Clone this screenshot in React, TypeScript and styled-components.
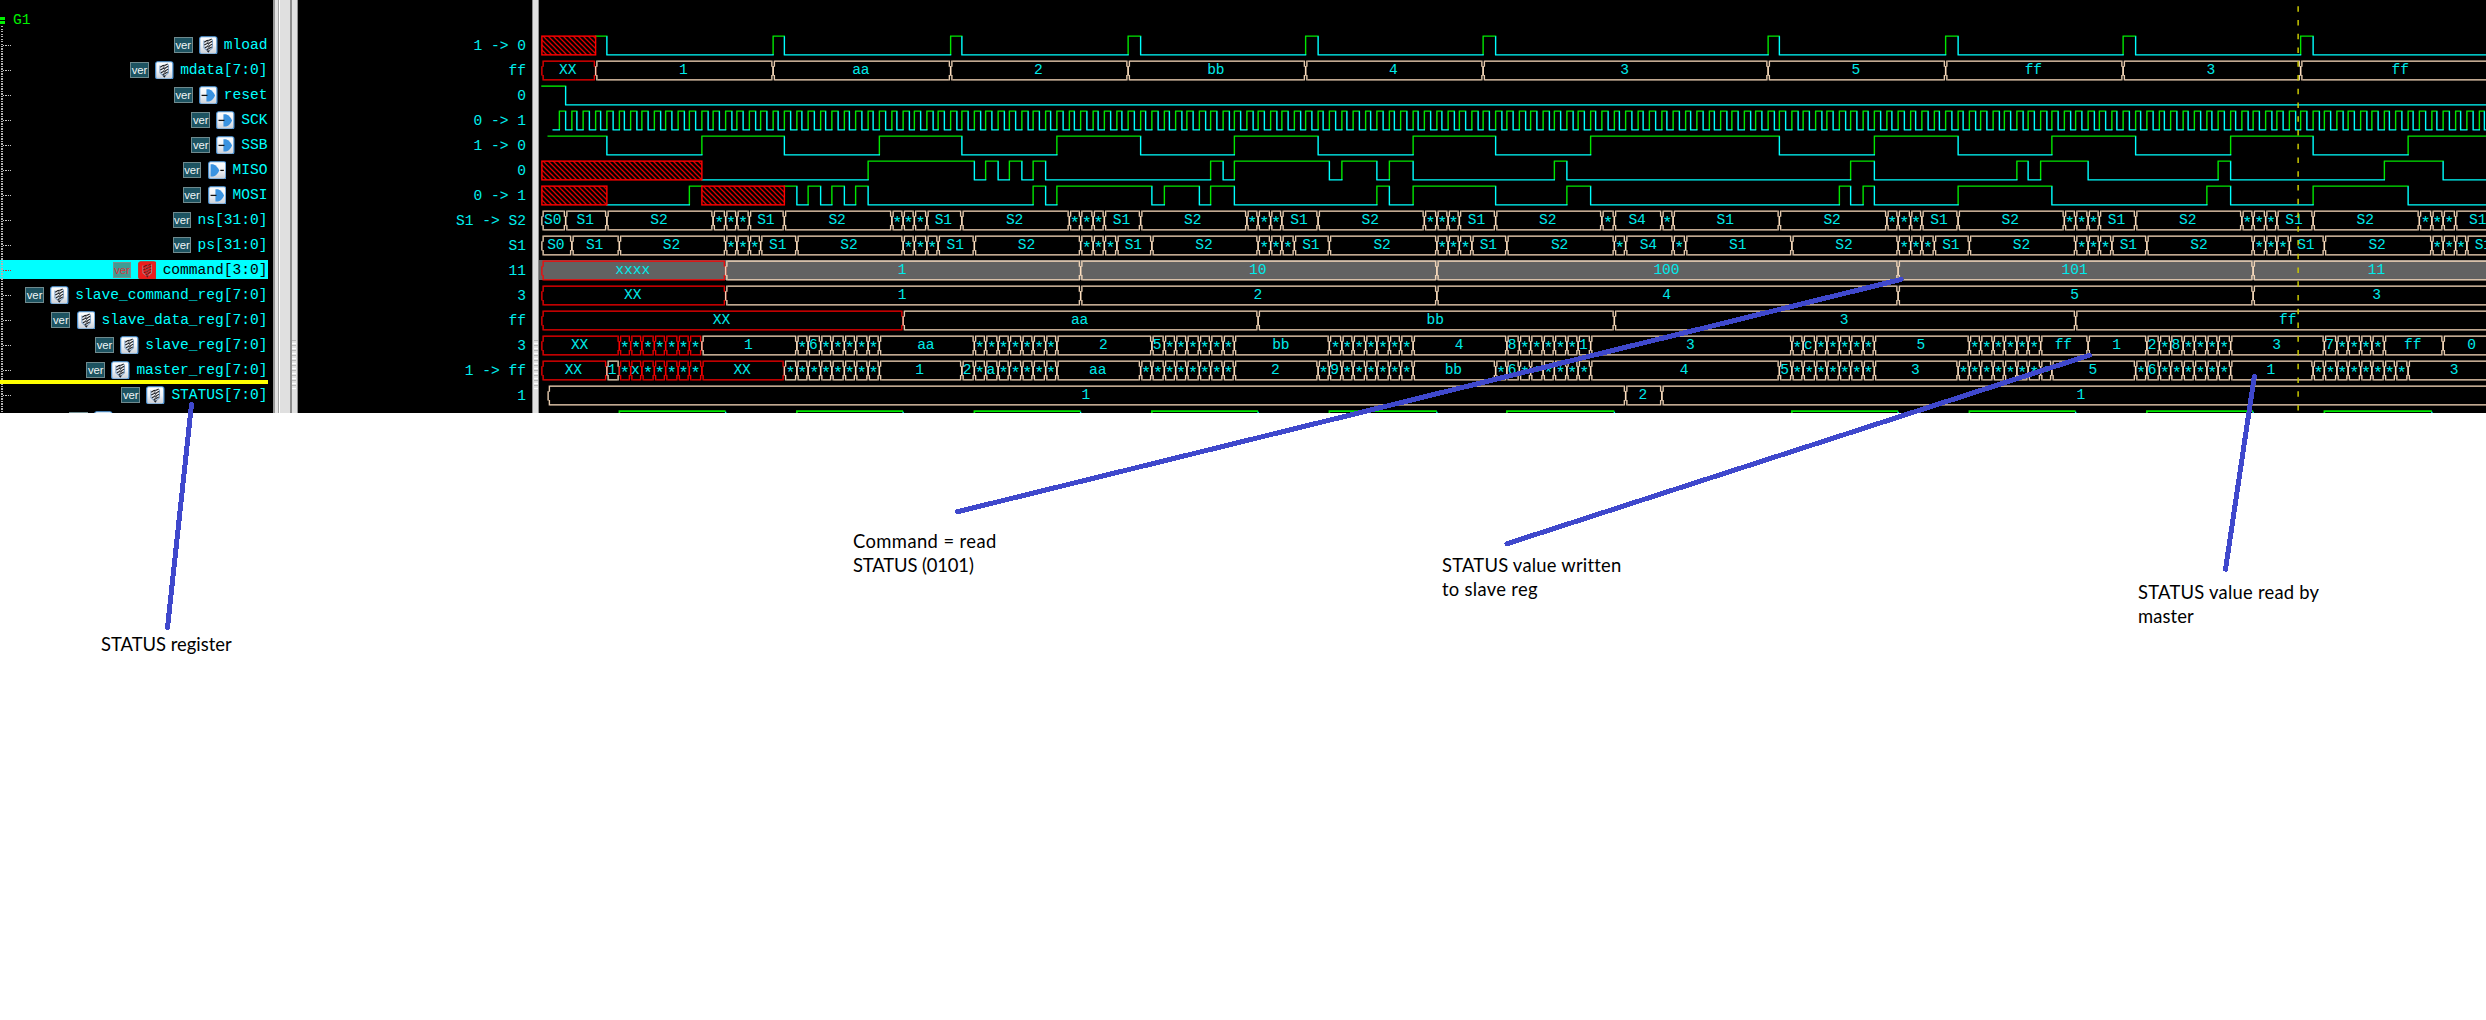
import React from "react";
import styled, { createGlobalStyle } from "styled-components";

const GlobalStyle = createGlobalStyle`
  html, body { margin: 0; padding: 0; background: #ffffff; }
  * { box-sizing: border-box; }
`;

const MONO = `"Liberation Mono", "Courier New", monospace`;
const CYAN = "#00ffff";
const GREEN = "#00e600";
const RED = "#ff0000";
const TAN = "#ffe0c0";

/* ---------- layout ---------- */

const Page = styled.main`
  position: relative;
  width: 2486px;
  height: 1020px;
  overflow: hidden;
  background: #ffffff;
`;

const Viewer = styled.section`
  display: grid;
  grid-template-columns: 273px 25px 234px 7px 1fr;
  height: 413px;
  overflow: hidden;
  background: #000000;
  font: 14.583px/25px ${MONO};
`;

const Pane = styled.div`
  position: relative;
  display: flex;
  flex-direction: column;
  min-width: 0;
  overflow: hidden;
`;

const NamePane = styled(Pane)`
  padding-right: 5.4px;
`;

const Header = styled.div`
  display: flex;
  align-items: center;
  flex: none;
  height: 32.5px;
  padding-top: 9px;
  color: #00f000;
`;

const GroupMark = styled.span`
  width: 5px;
  height: 7px;
  margin-right: 8px;
  border: solid #00f000;
  border-width: 3px 0;
`;

const Row = styled.div`
  flex: none;
  height: 25px;
`;

const NameRow = styled(Row)<{ $selected?: boolean }>`
  display: flex;
  align-items: center;
  justify-content: flex-end;
  gap: 6.3px;
  color: ${(p) => (p.$selected ? "#000" : CYAN)};
  background: ${(p) =>
    p.$selected ? `linear-gradient(${CYAN}, ${CYAN}) 0 2.5px / 100% 19px no-repeat` : "none"};
`;

const Stub = styled.span<{ $selected?: boolean }>`
  width: 8px;
  height: 1px;
  margin: 0 auto 0 3px;
  background: repeating-linear-gradient(
    90deg,
    ${(p) => (p.$selected ? "#c03030" : "#c8c8c8")} 0 1.4px,
    transparent 1.4px 2.5px
  );
`;

const TreeLine = styled.div`
  position: absolute;
  left: 1px;
  top: 26px;
  bottom: 0;
  width: 1.6px;
  background: repeating-linear-gradient(#b4b4b4 0 1.3px, transparent 1.3px 2.5px);
`;

const InsertMark = styled.div`
  position: absolute;
  left: 0;
  top: 380px;
  width: 267.7px;
  height: 3.75px;
  background: #ffff00;
`;

const Badge = styled.span<{ $selected?: boolean }>`
  width: 18.8px;
  height: 16.6px;
  border: 1px solid ${(p) => (p.$selected ? "#7b8f8c" : "#6f8a8e")};
  background: ${(p) => (p.$selected ? "#3f9c94" : "#1d5361")};
  color: ${(p) => (p.$selected ? "#d8343c" : "#f2f6f6")};
  font: 11.3px/15px "Liberation Sans", Arial, sans-serif;
  text-align: center;
`;

const NameText = styled.span<{ $chars?: number }>`
  white-space: pre;
  width: ${(p) => (p.$chars ? `${p.$chars * 8.75}px` : "auto")};
`;

const ValueRow = styled(Row)`
  display: flex;
  justify-content: flex-end;
  padding: 1.4px 6px 0 0;
  color: #00eeee;
  white-space: pre;
`;

const Splitter = styled.div`
  display: flex;
  background: #e0e0e0;
`;

const Strip = styled.span<{ $w: number; $c: string }>`
  flex: none;
  width: ${(p) => p.$w}px;
  background: ${(p) => p.$c};
`;

const GripTrack = styled.span`
  flex: 1;
  padding: 340px 0.5px 0;
  background: #e0e0e0;
`;

const Grip = styled.span`
  display: block;
  height: 50px;
  background: repeating-linear-gradient(#bcbcbc 0 1px, #e4e4e4 1px 3px, #ffffff 3px 4.4px, #e4e4e4 4.4px 5px);
`;

const WaveRow = styled(Row)<{ $selected?: boolean }>`
  background: ${(p) =>
    p.$selected ? "linear-gradient(#626262, #626262) 0 2.5px / 100% 20px no-repeat" : "none"};
`;

const WaveSvg = styled.svg`
  display: block;
  width: 1947px;
  height: 25px;
  overflow: visible;
  fill: none;
  stroke-width: 1.12;
  font: 11.667px ${MONO};
`;

const BusText = styled.text<{ $star?: boolean }>`
  fill: #00eaea;
  stroke: none;
  white-space: pre;
  font-size: ${(p) => (p.$star ? 13.4 : 11.667)}px;
`;

const CursorSvg = styled.svg`
  position: absolute;
  left: 0;
  top: 0;
  width: 1947px;
  height: 413px;
`;

const Marker = styled.svg`
  position: absolute;
  left: 0;
  top: 0;
  width: 2486px;
  height: 1020px;
`;

const Note = styled.p<{ $x: number; $y: number }>`
  position: absolute;
  left: ${(p) => p.$x}px;
  top: ${(p) => p.$y}px;
  margin: 0;
  color: #000000;
  font: 18.4px/24.2px Lato, "Noto Sans", sans-serif;
  white-space: pre;
`;

const NoteLine = styled.span<{ $spacing?: number }>`
  display: block;
  letter-spacing: ${(p) => p.$spacing ?? 0}px;
`;

/* ---------- time axis ---------- */

const ORIGIN = 431.2;
const START = -99;
const END = 999;

/** Position of a clock tick on the wave pane grid. */
const px = (k: number) =>
  k === START ? 433 : k === END ? 2001 : Math.floor(485.55 + 9.478 * k);

const HIGH = 2.5;
const LOW = 17.5;

/* ---------- bit traces ---------- */

type Level = "0" | "1" | "x";
type Step = [number, Level];

function levels(first: Step, edges: number[]): Step[] {
  const out: Step[] = [first];
  let level = first[1];
  edges.forEach((k) => {
    level = level === "1" ? "0" : "1";
    out.push([k, level]);
  });
  return out;
}

function Bit({ steps }: { steps: Step[] }) {
  let green = "";
  let cyan = "";
  const blocks: [number, number][] = [];
  steps.forEach(([k, level], i) => {
    const a = px(k) + 0.5;
    const b = px(i + 1 < steps.length ? steps[i + 1][0] : END) + 0.5;
    const prev = i > 0 ? steps[i - 1][1] : level;
    if (level === "x") {
      blocks.push([a, b]);
      return;
    }
    if (level === "1") {
      if (prev === "0") green += `M${a} ${LOW}V${HIGH}`;
      green += `M${a - 0.5} ${HIGH}H${b + 0.5}`;
    } else {
      if (prev === "1") cyan += `M${a} ${HIGH}V${LOW}`;
      cyan += `M${a - 0.5} ${LOW}H${b + 0.5}`;
    }
  });
  return (
    <>
      <path d={green} stroke={GREEN} />
      <path d={cyan} stroke={CYAN} />
      {blocks.map(([a, b]) => (
        <rect key={a} x={a} y={HIGH} width={b - a} height={LOW - HIGH} fill="url(#unknown)" stroke={RED} />
      ))}
    </>
  );
}

/* ---------- bus traces ---------- */

type Seg = [number, string, boolean?];

/** One character per clock tick, starting at tick k. */
const cells = (k: number, chars: string, red = false): Seg[] =>
  chars.split("").map((c, i) => [k + i, c, red] as Seg);

function Bus({ segs }: { segs: Seg[] }) {
  return (
    <>
      {segs.map(([k, label, red], i) => {
        const a = px(k) + 0.5;
        const b = px(i + 1 < segs.length ? segs[i + 1][0] : END) + 0.5;
        const star = label === "*";
        const left = (a + b) / 2 - label.length * 3.5 - (star ? 0.7 : 0.8);
        return (
          <g key={k}>
            <path
              stroke={red ? RED : TAN}
              d={`M${a + 1.5} ${HIGH}H${b - 1.5}M${a + 1.5} ${LOW}H${b - 1.5}`}
            />
            <path
              stroke={red ? RED : TAN}
              strokeOpacity={0.9}
              d={`M${a + 1} 2V7M${a} 6.5V14M${a + 1} 13.5V18M${b - 1} 2V7M${b} 6.5V14M${b - 1} 13.5V18`}
            />
            <BusText $star={star} x={left} y={star ? 15.6 : 13}>
              {label}
            </BusText>
          </g>
        );
      })}
    </>
  );
}

/* ---------- signal data ---------- */

const loads = [0, 14, 15, 29, 30, 44, 45, 59, 60, 74, 75, 98, 99, 113, 114, 128, 129, 143, 144];

const clockEdges: number[] = [];
for (let k = -4; k < 160; k += 0.5) clockEdges.push(k);

function states(shift: number): Seg[] {
  const out: Seg[] = [
    [START, "S0"],
    [shift ? -3 : -3.5, "S1"],
  ];
  [0, 15, 30, 45, 60, 75, 99, 114, 129, 144].forEach((b) => {
    const k = b + shift;
    out.push([k, "S2"]);
    if (b === 75) {
      out.push([k + 9, "*"], [k + 10, "S4"], [k + 14, "*"], [k + 15, "S1"]);
    } else {
      out.push([k + 9, "*"], [k + 10, "*"], [k + 11, "*"], [k + 12, "S1"]);
    }
  });
  return out;
}

type IconKind = "reg" | "in" | "out" | null;
interface Signal {
  name: string;
  icon: IconKind;
  value: string;
  selected?: boolean;
  bits?: Step[];
  bus?: Seg[];
}

const signals: Signal[] = [
  {
    name: "mload",
    icon: "reg",
    value: "1 -> 0",
    bits: [[START, "x"], ...levels([-1, "1"], loads)],
  },
  {
    name: "mdata[7:0]",
    icon: "reg",
    value: "ff",
    bus: [
      [START, "XX", true], [-1, "1"], [14, "aa"], [29, "2"], [44, "bb"], [59, "4"],
      [74, "3"], [98, "5"], [113, "ff"], [128, "3"], [143, "ff"],
    ],
  },
  { name: "reset", icon: "in", value: "0", bits: [[START, "1"], [-3.5, "0"]] },
  { name: "SCK", icon: "in", value: "0 -> 1", bits: levels([-4.5, "0"], clockEdges) },
  {
    name: "SSB",
    icon: "in",
    value: "1 -> 0",
    bits: levels(
      [-5, "1"],
      [0, 8, 15, 23, 30, 38, 45, 53, 60, 68, 75, 83, 99, 107, 114, 122, 129, 137, 144, 152]
    ),
  },
  {
    name: "MISO",
    icon: "out",
    value: "0",
    bits: [
      [START, "x"],
      ...levels(
        [8, "0"],
        [22, 31, 32, 33, 34, 35, 36, 37, 51, 52, 53, 61, 62, 65, 66, 68, 80, 81, 105, 107, 119, 120, 121, 125, 136, 137, 150, 155]
      ),
    ],
  },
  {
    name: "MOSI",
    icon: "in",
    value: "0 -> 1",
    bits: [
      [START, "x"],
      ...levels([0, "0"], [7]),
      [8, "x"],
      ...levels(
        [15, "1"],
        [16, 17, 18, 19, 20, 21, 22, 36, 37, 38, 46, 47, 50, 51, 53, 65, 66, 68, 75, 81, 83, 104, 105, 106, 107, 114, 122, 135, 137, 144, 152]
      ),
    ],
  },
  { name: "ns[31:0]", icon: null, value: "S1 -> S2", bus: states(0) },
  { name: "ps[31:0]", icon: null, value: "S1", bus: states(1) },
  {
    name: "command[3:0]",
    icon: "reg",
    value: "11",
    selected: true,
    bus: [[START, "xxxx", true], [10, "1"], [40, "10"], [70, "100"], [109, "101"], [139, "11"]],
  },
  {
    name: "slave_command_reg[7:0]",
    icon: "reg",
    value: "3",
    bus: [[START, "XX", true], [10, "1"], [40, "2"], [70, "4"], [109, "5"], [139, "3"]],
  },
  {
    name: "slave_data_reg[7:0]",
    icon: "reg",
    value: "ff",
    bus: [[START, "XX", true], [25, "aa"], [55, "bb"], [85, "3"], [124, "ff"]],
  },
  {
    name: "slave_reg[7:0]",
    icon: "reg",
    value: "3",
    bus: [
      [START, "XX", true], ...cells(1, "*******", true), [8, "1"], ...cells(16, "*6*****"),
      [23, "aa"], ...cells(31, "*******"), [38, "2"], ...cells(46, "5******"), [53, "bb"],
      ...cells(61, "*******"), [68, "4"], ...cells(76, "8*****1"), [83, "3"],
      ...cells(100, "*c*****"), [107, "5"], ...cells(115, "******"), [121, "ff"], [125, "1"],
      ...cells(130, "2*8****"), [137, "3"], ...cells(145, "7****"), [150, "ff"], [155, "0"],
    ],
  },
  {
    name: "master_reg[7:0]",
    icon: "reg",
    value: "1 -> ff",
    bus: [
      [START, "XX", true], [0, "1"], ...cells(1, "*x*****", true), [8, "XX", true],
      ...cells(15, "********"), [23, "1"], ...cells(30, "2*a*****"), [38, "aa"],
      ...cells(45, "********"), [53, "2"], ...cells(60, "*9******"), [68, "bb"],
      ...cells(75, "*6******"), [83, "4"], ...cells(99, "5*******"), [107, "3"],
      ...cells(114, "********"), [122, "5"], ...cells(129, "*6******"), [137, "1"],
      ...cells(144, "********"), [152, "3"],
    ],
  },
  {
    name: "STATUS[7:0]",
    icon: "reg",
    value: "1",
    bus: [[-5, "1"], [86, "2"], [89, "1"]],
  },
];

const tailPulses = [1, 16, 31, 46, 61, 76, 100, 115, 130, 145];

/* ---------- icons ---------- */

function SignalIcon({ kind, selected }: { kind: IconKind; selected?: boolean }) {
  const line = selected ? "#6a1818" : "#1c1e22";
  return (
    <svg width="18.6" height="18.8" viewBox="0 0 19 19">
      <rect
        x="0.7"
        y="0.7"
        width="17.6"
        height="17.6"
        rx="2"
        fill={selected ? "#ee1c1c" : "url(#tile)"}
        stroke={selected ? "#d02a20" : "#4d96d8"}
        strokeWidth="1.2"
      />
      {kind === "reg" && (
        <g fill="none">
          <path
            d="M5 4.6v7.2l4.5 4 4.3-4V3.4"
            stroke={selected ? "#b08080" : "#86a8cc"}
            strokeWidth="1.1"
          />
          <path
            d="M5.4 6.2L8 4.6l2-.2L13 3M5.4 9.2l2.8-1.6 2-.4 3.2-2M6 12l2.6-1.4 1.8-.4 3-2M7.8 14l2-1 3.4-2"
            stroke={line}
            strokeWidth="1.15"
          />
          <path
            d="M10.6 3.6L7.4 8M11.4 6.4l-3.6 4.8M11.6 9.2L9 13.2"
            stroke={selected ? "#9a5050" : "#5a5e66"}
            strokeWidth="1"
          />
          <path d="M7.8 14.6h3.4l-1.7 2.4z" fill={line} />
        </g>
      )}
      {kind === "in" && (
        <>
          <path d="M7.6 3.2h2.6c3.2 1 5 3.4 6.2 6.3-1.2 2.9-3 5.3-6.2 6.3H7.6z" fill="#3a93e0" />
          <path d="M2.6 9.5h6" stroke="#101010" strokeWidth="1.3" />
        </>
      )}
      {kind === "out" && (
        <>
          <path d="M2.6 3.2h2.6c3.2 1 5 3.4 6.4 6.3-1.4 2.9-3.2 5.3-6.4 6.3H2.6z" fill="#3a93e0" />
          <path d="M12.6 9.5h3.6" stroke="#101010" strokeWidth="1.3" />
        </>
      )}
    </svg>
  );
}

function SharedDefs() {
  return (
    <defs>
      <linearGradient id="tile" x1="0" y1="0" x2="0" y2="1">
        <stop offset="0" stopColor="#ffffff" />
        <stop offset="0.5" stopColor="#f1f3f6" />
        <stop offset="1" stopColor="#c9ced6" />
      </linearGradient>
      <pattern id="unknown" width="4" height="4" patternUnits="userSpaceOnUse">
        <path d="M0 0L4 4M-1 3L1 5M3 -1L5 1" stroke="#e00000" strokeWidth="1" />
      </pattern>
    </defs>
  );
}

/* ---------- app ---------- */

export default function App() {
  return (
    <Page>
      <GlobalStyle />
      <Viewer>
        <NamePane>
          <Header>
            <GroupMark />
            G1
          </Header>
          {signals.map((s) => (
            <NameRow key={s.name} $selected={s.selected}>
              <Stub $selected={s.selected} />
              <Badge $selected={s.selected}>ver</Badge>
              {s.icon && <SignalIcon kind={s.icon} selected={s.selected} />}
              <NameText>{s.name}</NameText>
            </NameRow>
          ))}
          <NameRow>
            <Badge />
            <SignalIcon kind="reg" />
            <NameText $chars={17} />
          </NameRow>
          <TreeLine />
          <InsertMark />
        </NamePane>

        <Splitter>
          <Strip $w={1.5} $c="#9a9a9a" />
          <Strip $w={3} $c="#e4e4e4" />
          <Strip $w={1.5} $c="#a4a4a4" />
          <Strip $w={1} $c="#ffffff" />
          <Strip $w={10} $c="#e0e0e0" />
          <Strip $w={1.5} $c="#8c8c8c" />
          <GripTrack>
            <Grip />
          </GripTrack>
          <Strip $w={1.2} $c="#909090" />
        </Splitter>

        <Pane>
          <Header />
          {signals.map((s) => (
            <ValueRow key={s.name}>{s.value}</ValueRow>
          ))}
        </Pane>

        <Splitter>
          <Strip $w={1.2} $c="#8c8c8c" />
          <GripTrack>
            <Grip />
          </GripTrack>
          <Strip $w={1} $c="#909090" />
        </Splitter>

        <Pane>
          <Header />
          {signals.map((s, i) => (
            <WaveRow key={s.name} $selected={s.selected}>
              <WaveSvg viewBox={`${ORIGIN} 0 1557.6 20`}>
                {i === 0 && <SharedDefs />}
                {s.bits && <Bit steps={s.bits} />}
                {s.bus && <Bus segs={s.bus} />}
              </WaveSvg>
            </WaveRow>
          ))}
          <WaveRow>
            <WaveSvg viewBox={`${ORIGIN} 0 1557.6 20`}>
              {tailPulses.map((k) => (
                <g key={k}>
                  <path d={`M${px(k) + 0.5} 5V2.5H${px(k + 9) + 0.5}`} stroke={GREEN} strokeWidth="1.3" />
                  <path d={`M${px(k + 9) + 0.5} 3V5`} stroke={CYAN} />
                </g>
              ))}
            </WaveSvg>
          </WaveRow>
          <CursorSvg viewBox={`${ORIGIN} 0 1557.6 330.4`}>
            <path d="M1838.5 5V330" stroke="#c8c800" strokeWidth="1.2" strokeDasharray="4.4 6.6" />
          </CursorSvg>
        </Pane>
      </Viewer>

      <Marker stroke="#3f48cc" strokeWidth="5" strokeLinecap="round" shapeRendering="crispEdges">
        <path d="M191.5 404.5L167.5 627.5" />
        <path d="M957.5 511.7L1901 279.5" />
        <path d="M1507 543.7L2089.5 355.2" />
        <path d="M2254.3 376.5L2225.5 569.3" />
      </Marker>

      <Note $x={101} $y={632}>
        <NoteLine>STATUS register</NoteLine>
      </Note>
      <Note $x={853} $y={529}>
        <NoteLine $spacing={0.4}>Command = read</NoteLine>
        <NoteLine $spacing={-0.12}>STATUS (0101)</NoteLine>
      </Note>
      <Note $x={1442} $y={552.5}>
        <NoteLine $spacing={0.22}>STATUS value written</NoteLine>
        <NoteLine $spacing={0.3}>to slave reg</NoteLine>
      </Note>
      <Note $x={2138} $y={579.5}>
        <NoteLine $spacing={0.24}>STATUS value read by</NoteLine>
        <NoteLine $spacing={0.1}>master</NoteLine>
      </Note>
    </Page>
  );
}
